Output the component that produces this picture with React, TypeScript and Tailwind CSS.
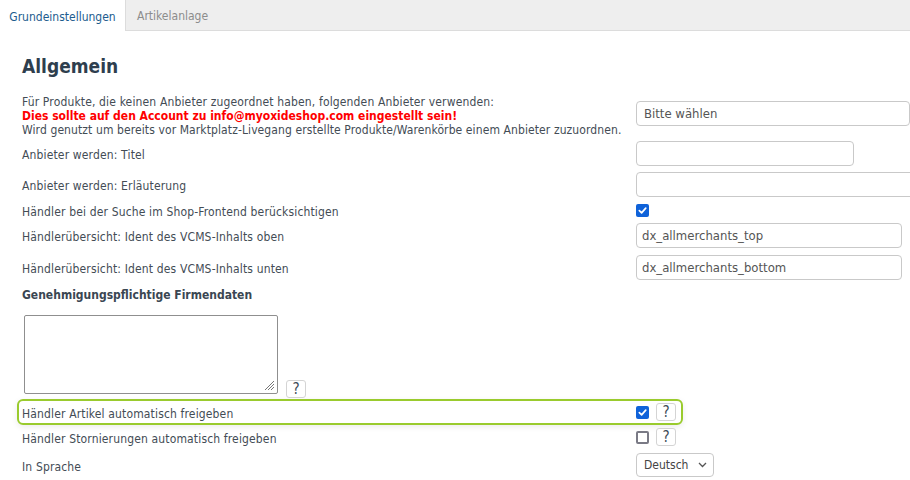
import React from "react";

const font = { fontFamily: 'Tahoma, "DejaVu Sans Condensed", "DejaVu Sans", sans-serif' };

function Check({ checked }: { checked: boolean }) {
  if (!checked) {
    return <span className="block h-[13px] w-[13px] rounded-[2px] border-2 border-[#7a7a85] bg-white" />;
  }
  return (
    <span className="flex h-[13px] w-[13px] items-center justify-center rounded-[2px] bg-[#0f62d9]">
      <svg width="9" height="9" viewBox="0 0 10 10" fill="none">
        <path d="M1.5 5.2 L4 7.6 L8.6 2.4" stroke="white" strokeWidth="1.9" strokeLinecap="round" strokeLinejoin="round" />
      </svg>
    </span>
  );
}

function Help() {
  return (
    <span className="flex h-[18px] w-[20px] items-center justify-center rounded-[3px] border border-[#d4d4d4] bg-white pt-[1px] text-[15px] leading-none text-[#3d4a57]">
      ?
    </span>
  );
}

function Input({ value, w }: { value?: string; w: string }) {
  return (
    <div className={`flex h-[25px] items-center rounded-[4px] border border-[#c9c9c9] bg-white px-[5px] text-[13px] text-[#555] ${w}`}>
      {value}
    </div>
  );
}

function Row({ top, h, label, children }: { top: string; h: string; label: React.ReactNode; children: React.ReactNode }) {
  return (
    <div className={`flex items-center ${top} ${h}`}>
      <div className="w-[614px] shrink-0 pt-[3px] tracking-[0.15px]">{label}</div>
      <div className="flex items-center gap-[7px]">{children}</div>
    </div>
  );
}

export default function App() {
  return (
    <div className="h-[480px] w-[910px] overflow-hidden bg-white text-[12px] text-[#434c55]" style={font}>
      {/* Tabs */}
      <div className="flex h-[31px] bg-[#eeeeee]">
        <div className="flex h-[31px] w-[125px] items-center justify-center bg-white pt-[2px] text-[12px] text-[#1d5c8e]">
          Grundeinstellungen
        </div>
        <div className="flex h-[31px] flex-1 items-center border-b border-l border-[#dcdcdc] pl-[11px] pt-[2px] text-[12px] text-[#8c8c8c]">
          Artikelanlage
        </div>
      </div>

      <div className="pl-[22px]">
        <h1 className="mt-[23px] h-[24px] text-[19px] font-bold leading-[24px] text-[#2e3e4e]">Allgemein</h1>

        {/* Row 1 */}
        <div className="mt-[17px] flex">
          <div className="w-[614px] shrink-0 leading-[14px]">
            <div className="tracking-[0.15px]">Für Produkte, die keinen Anbieter zugeordnet haben, folgenden Anbieter verwenden:</div>
            <div className="font-bold text-[#ff0000]">Dies sollte auf den Account zu info@myoxideshop.com eingestellt sein!</div>
            <div className="tracking-[0.1px]">Wird genutzt um bereits vor Marktplatz-Livegang erstellte Produkte/Warenkörbe einem Anbieter zuzuordnen.</div>
          </div>
          <div className="mt-[6px] flex h-[25px] w-[300px] items-center rounded-[4px] border border-[#c9c9c9] px-[7px] text-[13px] text-[#555]">
            Bitte wählen
          </div>
        </div>

        <Row top="mt-[4px]" h="h-[25px]" label="Anbieter werden: Titel">
          <Input w="w-[218px]" />
        </Row>
        <Row top="mt-[6px]" h="h-[25px]" label="Anbieter werden: Erläuterung">
          <Input w="w-[300px]" />
        </Row>
        <Row top="mt-[3px]" h="h-[20px]" label="Händler bei der Suche im Shop-Frontend berücksichtigen">
          <Check checked />
        </Row>
        <Row top="mt-[3px]" h="h-[25px]" label="Händlerübersicht: Ident des VCMS-Inhalts oben">
          <Input value="dx_allmerchants_top" w="w-[266px]" />
        </Row>
        <Row top="mt-[7px]" h="h-[25px]" label="Händlerübersicht: Ident des VCMS-Inhalts unten">
          <Input value="dx_allmerchants_bottom" w="w-[266px]" />
        </Row>

        <div className="mt-[6px] flex h-[16px] items-center pt-[2px] font-bold text-[#3a4652]">Genehmigungspflichtige Firmendaten</div>

        {/* Textarea */}
        <div className="mt-[13px] flex items-end pl-[2px]">
          <div className="relative h-[79px] w-[254px] rounded-[2px] border border-[#8f8f8f] bg-white">
            <svg className="absolute bottom-[2px] right-[2px]" width="11" height="11" viewBox="0 0 11 11">
              <path d="M10 1 L1 10 M10 4 L4 10 M10 7 L7 10" stroke="#777" strokeWidth="1" />
            </svg>
          </div>
          <div className="mb-[-4px] ml-[8px]">
            <Help />
          </div>
        </div>

        {/* Highlighted row */}
        <div className="-ml-[5px] mt-[5px] flex h-[26px] w-[666px] items-center rounded-[6px] border-2 border-[#9acb2e] pl-[3px] shadow-[0_2px_6px_rgba(0,0,0,0.08)]">
          <div className="w-[614px] shrink-0 pt-[3px] tracking-[0.15px]">Händler Artikel automatisch freigeben</div>
          <div className="flex items-center gap-[7px]">
            <Check checked />
            <Help />
          </div>
        </div>

        <Row top="mt-[2px]" h="h-[20px]" label="Händler Stornierungen automatisch freigeben">
          <Check checked={false} />
          <Help />
        </Row>

        <Row top="mt-[6px]" h="h-[24px]" label="In Sprache">
          <div className="flex h-[24px] w-[78px] items-center justify-between rounded-[4px] border border-[#c9c9c9] pl-[7px] pr-[6px] text-[12px] text-[#444]">
            Deutsch
            <svg width="9" height="6" viewBox="0 0 9 6" fill="none">
              <path d="M1 1 L4.5 4.5 L8 1" stroke="#555" strokeWidth="1.3" />
            </svg>
          </div>
        </Row>
      </div>
    </div>
  );
}
